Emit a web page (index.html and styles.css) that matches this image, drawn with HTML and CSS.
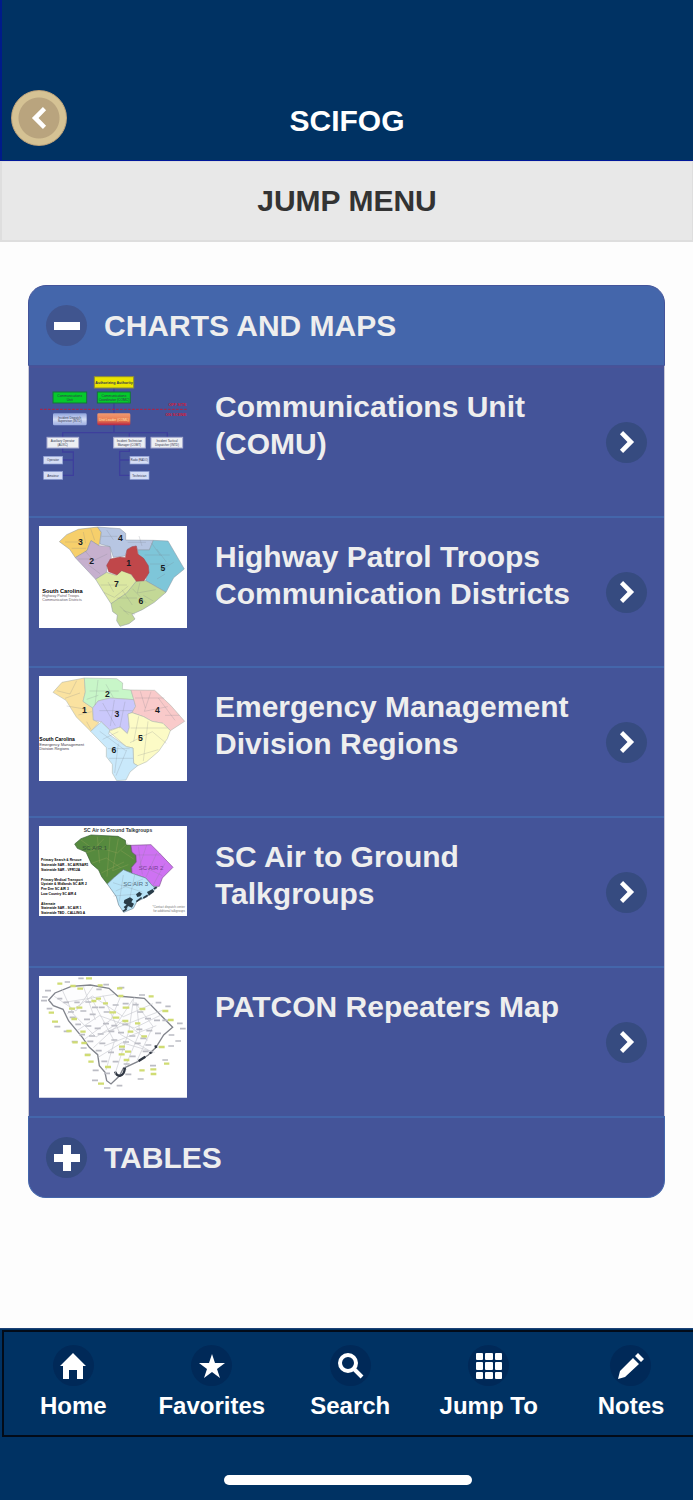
FILE: index.html
```html
<!DOCTYPE html>
<html lang="en">
<head>
<meta charset="utf-8">
<meta name="viewport" content="width=device-width, initial-scale=1">
<title>SCIFOG</title>
<link rel="stylesheet" href="styles.css">
</head>
<body>
<svg class="symbols" aria-hidden="true">
  <symbol id="chevron" viewBox="0 0 14 14"><path d="M4.500 0 11.500 7 4.500 14 2.500 12 7.300 7 2.500 2Z"/></symbol>
</svg>
<header class="topbar">
  <button class="back" type="button" aria-label="Back"><svg class="chevron chevron-left"><use href="#chevron"/></svg></button>
  <h1 class="title">SCIFOG</h1>
</header>
<button class="jump" type="button">JUMP MENU</button>
<main class="content">
  <div class="accordion">
    <button class="section section-open" type="button" aria-expanded="true">
      <span class="disc"><svg class="sign" viewBox="0 0 26 26"><path d="M0 9h26v8H0z"/></svg></span>
      <span>CHARTS AND MAPS</span>
    </button>
    <ul class="list">
      <li><a class="item" href="#comu">
        <svg class="thumb" viewBox="27 30 444 323" aria-hidden="true">
          <defs>
            <linearGradient id="pale" x1="0" y1="0" x2="0" y2="1"><stop offset="0" stop-color="#8ea3dc"/><stop offset=".5" stop-color="#d4ddf5"/><stop offset="1" stop-color="#9aabe0"/></linearGradient>
            <linearGradient id="warm" x1="0" y1="0" x2="0" y2="1"><stop offset="0" stop-color="#f09a72"/><stop offset=".6" stop-color="#e8794e"/><stop offset="1" stop-color="#b02048"/></linearGradient>
          </defs>
          <path d="M252 60V198M98 215V200H412V215M298 200V256H269V328H300M269 282H300M98 240V258H130V328H98M130 282H98" fill="none" stroke="#3d3f9c" stroke-width="4"/>
          <path d="M30 130H470" stroke="#a02850" stroke-width="4" stroke-dasharray="8 4"/>
          <rect x="193" y="32" width="118" height="34" fill="#e9e400" stroke="#8c8c38" stroke-width="3"/>
          <g fill="#06c92c" stroke="#17713f" stroke-width="3"><rect x="69" y="78" width="101" height="33"/><rect x="202" y="78" width="99" height="33"/></g>
          <rect x="69" y="142" width="101" height="36" rx="4" fill="url(#pale)"/>
          <rect x="202" y="142" width="99" height="36" rx="4" fill="url(#warm)"/>
          <g fill="#eceef2" stroke="#a9add0" stroke-width="3"><rect x="51" y="214" width="95" height="32"/><rect x="251" y="214" width="95" height="32"/><rect x="363" y="214" width="95" height="32"/></g>
          <g fill="#d5ddf5" stroke="#91a2d5" stroke-width="2"><rect x="41" y="271" width="57" height="23"/><rect x="41" y="317" width="57" height="23"/><rect x="300" y="271" width="57" height="23"/><rect x="300" y="317" width="57" height="23"/></g>
          <g class="chart-text" text-anchor="middle">
            <text x="252" y="54" font-size="11" font-weight="bold">Authorizing Authority</text>
            <text x="119" y="94" font-size="10">Communications</text><text x="119" y="106" font-size="10">Unit</text>
            <text x="252" y="94" font-size="10">Communications</text><text x="252" y="106" font-size="10">Coordinator (COMC)</text>
            <text x="119" y="159" font-size="9">Incident Dispatch</text><text x="119" y="169" font-size="9">Supervisor (INTD)</text>
            <text x="252" y="165" font-size="10" fill="#ffe0b0">Unit Leader (COML)</text>
            <text x="98" y="229" font-size="9">Auxiliary Operator</text><text x="98" y="240" font-size="9">(AUXC)</text>
            <text x="298" y="229" font-size="9">Incident Technician</text><text x="298" y="240" font-size="9">Manager (COMT)</text>
            <text x="411" y="229" font-size="9">Incident Tactical</text><text x="411" y="240" font-size="9">Dispatcher (INTD)</text>
            <text x="69" y="286" font-size="9">Operator</text><text x="69" y="332" font-size="9">Amateur</text>
            <text x="328" y="286" font-size="8">Radio (RADO)</text><text x="328" y="332" font-size="9">Technician</text>
          </g>
          <g font-size="12" font-weight="bold" fill="#d21a38" text-anchor="end"><text x="469" y="121">OFF SITE</text><text x="469" y="149">ON SCENE</text></g>
        </svg>
        <span class="label">Communications Unit (COMU)</span>
        <span class="disc"><svg class="chevron"><use href="#chevron"/></svg></span>
      </a></li>
      <li><a class="item" href="#troops">
        <svg class="thumb" viewBox="27 24 444 306" aria-hidden="true">
          <path fill="#fff" d="M27 24h444v306H27z"/>
          <g stroke="#8b94a0" stroke-width="1.500" stroke-linejoin="round">
            <path fill="#f6cf6b" d="M88 71 110 50 145 34 203 27 214 43 207 83 183 68 171 98 136 119 119 94Z"/>
            <path fill="#b7c6e2" d="M203 27 270 32 287 46 287 66 370 67 358 96 323 96 318 84 294 92 285 114 250 118 240 86 210 78 214 43Z"/>
            <path fill="#c6b0ce" d="M136 119 171 98 183 68 207 83 240 86 244 118 230 148 230 163 197 184Z"/>
            <path fill="#7ec6d9" d="M370 67 414 69 463 153 431 179 408 223 347 188 356 154 342 129 326 118 323 96 358 96Z"/>
            <path fill="#dce8a2" d="M197 184 230 163 258 172 276 157 300 165 320 188 300 240 243 257 221 223Z"/>
            <path fill="#c3d896" d="M320 188 347 188 408 223 373 253 337 275 306 289 315 303 297 317 270 325 260 308 262 291 248 281 243 257 290 225Z"/>
            <path fill="#c0474a" stroke="#9b4652" d="M230 142 241 123 270 117 286 119 291 95 306 86 319 84 324 109 341 121 355 143 357 164 342 188 319 190 304 169 275 158 261 171 236 161Z"/>
          </g>
          <path class="county" d="M105 72h45M125 91h43M160 42l7 34M182 32l12 35M215 55h47M230 36l20 29M293 73h55M327 54l9 30M364 74l27 39M380 93l29 39M344 111h75M360 138h55M394 155l37-22M381 183l24-15M145 123h43M165 98l25 30 42-20M174 140l36 27M212 201h79M221 223l32 15 42-34M234 192l17 30M260 240h61M276 215l31 46M307 212l42 43M330 193l-8 32 55-10M280 278l35 11M270 265l25 25M340 232l30 17"/>
          <g class="map-num" font-size="26"><text x="151" y="81">3</text><text x="185" y="137">2</text><text x="271" y="70">4</text><text x="296" y="143">1</text><text x="399" y="158">5</text><text x="259" y="207">7</text><text x="333" y="258">6</text></g>
          <text x="37" y="224" font-size="17" font-weight="bold">South Carolina</text><g font-size="11" fill="#665c68"><text x="37" y="237">Highway Patrol Troops</text><text x="37" y="250">Communication Districts</text></g>
        </svg>
        <span class="label">Highway Patrol Troops Communication Districts</span>
        <span class="disc"><svg class="chevron"><use href="#chevron"/></svg></span>
      </a></li>
      <li><a class="item" href="#regions">
        <svg class="thumb" viewBox="27 28 444 315" aria-hidden="true">
          <path fill="#fff" d="M27 28h444v315H27z"/>
          <g stroke="#a9b0a9" stroke-width="1.500" stroke-linejoin="round">
            <path fill="#fae2a0" d="M69 77 96 47 163 34 166 76 159 104 188 124 190 160 207 168 182 194 139 151 108 101Z"/>
            <path fill="#c8f6c8" d="M163 34 260 36 278 49 277 68 303 70 312 99 240 94 204 103 188 124 159 104 166 76Z"/>
            <path fill="#cac8fb" d="M188 124 204 103 240 94 312 99 317 119 306 138 294 142 298 182 292 201 272 181 239 190 214 166 190 160Z"/>
            <path fill="#f9caca" d="M303 70 374 71 422 116 464 164 421 192 399 170 366 164 341 150 306 138 317 119Z"/>
            <path fill="#fcfbc6" d="M306 138 341 150 366 164 399 170 421 192 412 216 386 254 350 285 323 297 311 290 309 244 289 240 236 194 270 181 292 201 298 182 294 142Z"/>
            <path fill="#c9e9fb" d="M182 194 214 166 239 190 236 202 289 240 309 244 311 290 323 297 300 316 288 340 260 342 247 319 247 293 229 270 229 243Z"/>
          </g>
          <path class="county" d="M80 72l40 10 20-40M105 95l45-16M110 118l60 10M145 145l40-10M170 165l13 24M179 73h87M204 40l-9 75M228 53l22 40M170 98l35-12M208 132h100M218 109l38 68M253 100l-12 78M285 105l-16 80M315 94h88M331 74l15 50M363 75l-20 59 70-14M385 94l50 67M405 146h43M302 184h110M326 149l-15 76M354 164l-14 119M300 228l67-33 42 35M323 267l62-18M209 194l78 58M218 218l47-23M234 246h65M237 275h72M265 231l-11 88M290 250l-32 77"/>
          <g class="map-num" font-size="26"><text x="163" y="140">1</text><text x="232" y="90">2</text><text x="261" y="151">3</text><text x="382" y="140">4</text><text x="331" y="223">5</text><text x="252" y="260">6</text></g>
          <text x="28" y="224" font-size="15" font-weight="bold">South Carolina</text><g font-size="12" fill="#45414b"><text x="28" y="238">Emergency Management</text><text x="28" y="251">Division Regions</text></g>
        </svg>
        <span class="label">Emergency Management Division Regions</span>
        <span class="disc"><svg class="chevron"><use href="#chevron"/></svg></span>
      </a></li>
      <li><a class="item" href="#air">
        <svg class="thumb" viewBox="27 23 444 271" aria-hidden="true">
          <path fill="#fff" d="M27 23h444v271H27z"/>
          <path fill="#568a3e" stroke="#395f36" stroke-width="2" d="M134 77 153 61 183 50 264 54 286 66 288 80 303 81 306 101 318 111 319 131 305 147 306 165 280 154 267 167 253 177 232 197 215 175 206 155 184 136 168 101 142 90Z"/>
          <path fill="#ce72f2" stroke="#805093" stroke-width="2" d="M303 81 363 79 388 104 429 147 397 179 388 204 369 204 347 179 306 165 305 147 319 131 318 111 306 101Z"/>
          <path fill="#b8e4f8" stroke="#6f8897" stroke-width="2" d="M232 197 253 177 280 154 306 165 347 179 369 204 382 207 350 236 321 249 310 270 281 282 266 260 259 235Z"/>
          <path d="M153 65l38 28 30-31M169 103l43-14 50 15 31-29M185 135l44-16 43 29M202 55l7 79M240 56l-9 119M265 61l-17 96 47-18M214 164l68-33M273 97l38 25" fill="none" stroke="#9ca85b"/>
          <path class="county" d="M310 110h79M325 85l12 83M350 80l-20 60 67 32M380 104l-31 71M405 135l-36 66M249 193l88 28M257 218l82-36M280 170l-12 79M314 170l-22 103M250 233l90-7"/>
          <path d="M283 245l17-8 9 6-5 9 8 4-6 12-12-5-6 11-7-8 9-7-9-5ZM318 228l10-8 8 6-5 8-9 2ZM351 221l17-9 5 8-16 12Z" fill="#293c48"/>
          <path d="M279 279l11-7M319 250l16-12M340 239l13-8M371 211l9-4" stroke="#2d3a45" stroke-width="5"/>
          <g text-anchor="middle"><text x="264" y="42" font-size="15" font-weight="bold" fill="#303840">SC Air to Ground Talkgroups</text><text x="194" y="95" font-size="18" fill="#32533a">SC AIR 1</text><text x="363" y="155" font-size="18" fill="#794096">SC AIR 2</text><text x="317" y="204" font-size="18" fill="#506b7d">SC AIR 3</text></g>
          <g font-size="10" font-weight="bold"><text x="33" y="129">Primary Search &amp; Rescue</text><text x="33" y="143">Statewide SAR - SC AIR/SAR1</text><text x="33" y="157">Statewide SAR - VFR12A</text><text x="33" y="187">Primary Medical Transport</text><text x="33" y="201">Upstate &amp; Midlands SC AIR 2</text><text x="33" y="215">Pee Dee SC AIR 3</text><text x="33" y="229">Low Country SC AIR 4</text><text x="33" y="259">Alternate</text><text x="33" y="273">Statewide SAR - SC AIR 1</text><text x="33" y="287">Statewide TBD - CALLING A</text></g>
          <g font-size="9" fill="#777" text-anchor="end"><text x="465" y="270">*Contact dispatch center</text><text x="465" y="281">for additional talkgroups</text></g>
        </svg>
        <span class="label">SC Air to Ground Talkgroups</span>
        <span class="disc"><svg class="chevron"><use href="#chevron"/></svg></span>
      </a></li>
      <li><a class="item" href="#patcon">
        <svg class="thumb" viewBox="27 24 444 365" aria-hidden="true">
          <path fill="#fff" d="M27 24h444v365H27z"/>
          <path d="M56 96 75 75 124 55 181 51 237 61 263 84 343 91 428 178 401 201 378 238 354 262 323 281 280 301 268 324 243 348 230 338 225 313 208 293 203 260 178 238 157 208 116 159 99 124 70 113Z" fill="#fdfdfe" stroke="#81848c" stroke-width="4"/>
          <path d="M255 311c8 20 26 14 29-6M280 303l8-2M326 279l20-13M359 256l8-5M376 232l3 8" fill="none" stroke="#303743" stroke-width="7"/>
          <path d="M73 85l65 44 51-73M95 62l34 75 69 70 62-39 53-80M112 137l75-53 93 62 89-39M141 188l67-45 105 37 82-40M163 214l80-59 29-70M190 239l88-81 75 59M206 267l70-43 98 29M228 306l25-86-70-132M254 321l43-133 14-98M284 300l45-107-10-90M321 278l48-103-55-73M219 83l52 116 98 55M160 55l36 101M98 104l155-25M217 196l180-69M222 234l157-61" fill="none" stroke="#cacbd1" stroke-width="2"/>
          <path class="tags" d="M145 31h16M104 42h16M45 68h18M36 87h17M33 98h18M50 122h17M73 176h18M101 190h18M125 221h18M152 240h18M165 260h17M188 307h18M186 337h18M222 360h19M260 353h17M286 319h18M323 333h18M360 293h18M397 276h17M436 219h17M415 234h17M416 201h17M450 182h17M441 166h17M406 115h16M377 104h17M327 81h18M266 59h17M220 50h17M199 64h16M82 92h15M100 103h17M133 103h16M166 102h18M114 132h18M151 129h18M119 148h18M162 154h18M179 139h18M186 118h18M206 118h18M221 132h18M248 111h18M278 107h18M308 110h18M322 132h18M345 152h18M372 157h18M397 157h17M136 169h17M166 174h18M194 181h18M219 167h18M244 173h18M277 169h18M319 184h18M349 188h18M375 196h18M147 200h18M177 204h18M203 198h18M235 190h18M264 194h18M298 204h18M331 211h18M172 220h18M208 226h18M244 216h18M279 222h18M314 226h18M346 231h18M197 248h18M234 253h18M267 244h18M299 265h18M338 250h18M214 280h18M248 281h18M281 288h18M222 316h18"/>
          <path class="tags lime" d="M82 47h15M168 31h18M121 54h16M142 62h17M203 52h15M261 61h16M356 85h15M397 129h18M414 156h17M56 134h16M66 161h18M109 189h16M127 223h16M164 261h17M175 281h16M204 347h18M225 297h18M328 307h16M361 304h18M362 318h17M402 287h16M386 237h18M117 122h18M139 119h18M124 153h17M151 191h16M154 225h16M184 99h15M198 92h15M219 106h15M265 84h15M238 133h20M278 119h20M329 123h17M248 149h20M277 159h18M315 166h16M293 191h17M334 205h17M267 236h18M285 251h18M266 259h18M281 276h17"/>
        </svg>
        <span class="label">PATCON Repeaters Map</span>
        <span class="disc"><svg class="chevron"><use href="#chevron"/></svg></span>
      </a></li>
    </ul>
    <button class="section section-closed" type="button" aria-expanded="false">
      <span class="disc"><svg class="sign" viewBox="0 0 26 26"><path d="M9 0h8v9h9v8h-9v9H9v-9H0V9h9z"/></svg></span>
      <span>TABLES</span>
    </button>
  </div>
</main>
<footer class="footer">
  <nav class="nav">
    <a class="tab" href="#home"><span class="disc disc-dark"><svg class="icon" viewBox="0 0 28 28"><path d="M14 1 27 14H24V27H18V18H10V27H4V14H1Z"/></svg></span>Home</a>
    <a class="tab" href="#favorites"><span class="disc disc-dark"><svg class="icon" viewBox="0 0 28 28"><path d="M14 2 17 11H27L19 17 22 26 14 20 6 26 9 17 1 11H11Z"/></svg></span>Favorites</a>
    <a class="tab" href="#search"><span class="disc disc-dark"><svg class="icon" viewBox="0 0 28 28"><g fill="none" stroke="#fff" stroke-width="4"><circle cx="12" cy="11" r="8"/><path d="m17 16 9 9"/></g></svg></span>Search</a>
    <a class="tab" href="#jump"><span class="disc disc-dark"><svg class="icon" viewBox="0 0 28 28"><g><rect x="1" y="1" width="7" height="7" rx="1"/><rect x="10" y="1" width="8" height="7" rx="1"/><rect x="20" y="1" width="7" height="7" rx="1"/><rect x="1" y="10" width="7" height="8" rx="1"/><rect x="10" y="10" width="8" height="8" rx="1"/><rect x="20" y="10" width="7" height="8" rx="1"/><rect x="1" y="20" width="7" height="7" rx="1"/><rect x="10" y="20" width="8" height="7" rx="1"/><rect x="20" y="20" width="7" height="7" rx="1"/></g></svg></span>Jump To</a>
    <a class="tab" href="#notes"><span class="disc disc-dark"><svg class="icon" viewBox="0 0 28 28"><path d="M16 6 22 12 8 25 1 27 3 19ZM18 4 21 1 27 7 24 10Z"/></svg></span>Notes</a>
  </nav>
  <div class="home-bar"></div>
</footer>
</body>
</html>
```
FILE: styles.css
```css
* { box-sizing: border-box; }
body {
  margin: 0;
  min-height: 100vh;
  display: flex;
  flex-direction: column;
  background: #fdfdfd;
  font-family: "Liberation Sans", Arial, sans-serif;
  font-size: 30px;
  font-weight: bold;
  line-height: 37px;
}
button { font: inherit; margin: 0; cursor: pointer; }
a { color: inherit; text-decoration: none; }
.symbols { display: none; }
.topbar {
  display: grid;
  grid-template-columns: 56px 1fr 56px;
  align-items: center;
  padding: 90px 10px 14px 9px;
  background: #003263;
  border-left: 2px solid #001b8a;
  border-bottom: 1px solid #00189a;
  color: #fff;
}
.back {
  width: 56px;
  height: 56px;
  padding: 0;
  display: grid;
  place-items: center;
  border: 1px solid #c0a47a;
  border-radius: 50%;
  background: radial-gradient(circle, #b9a47e 20px, #d5c294 21px);
}
.title { margin: 4px 0 0; font-size: 30px; text-align: center; }
.chevron { width: 22px; height: 22px; fill: #fff; display: block; }
.chevron-left { transform: rotate(180deg); }
.jump {
  padding: 20px 0 21px;
  border: 2px solid #dedede;
  border-top-width: 1px;
  border-right-width: 1px;
  background: #e8e8e8;
  color: #333;
}
.content { flex: 1; padding: 43px 28px; }
.section {
  width: 100%;
  display: flex;
  align-items: center;
  gap: 17px;
  padding: 19px 17px;
  color: #eee;
  text-align: left;
}
.section-open { background: #4466ab; border: 1px solid #44549a; border-radius: 18px 18px 0 0; }
.section-closed { background: #445499; border: 1px solid #4466ab; border-radius: 0 0 18px 18px; border-top-width: 2px; }
.disc {
  flex: none;
  width: 41px;
  height: 41px;
  border-radius: 50%;
  background: #364b80;
  display: grid;
  place-items: center;
}
.section-open .disc { background: #40558f; }
.sign { width: 26px; height: 26px; fill: #fff; }
.list {
  list-style: none;
  margin: 0;
  padding: 0;
  border: solid #c9c8d8;
  border-width: 0 1px;
  background: #445499;
}
.item {
  min-height: 150px;
  display: grid;
  grid-template-columns: 148px 1fr 41px;
  align-items: start;
  padding: 8px 17px 8px 10px;
  border-top: 2px solid #4466ab;
  color: #eee;
}
.list li:first-child .item { border-top-color: #4a5297; }
.thumb { width: 148px; display: block; color: #222; font-weight: normal; }
.label { padding: 12px 28px 0; }
.item .disc { align-self: center; }
.county { fill: none; stroke: #777f86; stroke-width: 1px; opacity: .65; }
.map-num { fill: #171b24; font-weight: bold; text-anchor: middle; }
.chart-text { fill: #30334b; }
.tags { fill: none; stroke: #bbbcc4; stroke-width: 5px; }
.lime { stroke: #d0dc73; stroke-width: 7px; }
.footer {
  padding: 1px 0 15px 2px;
  border-top: 1px solid #1c4175;
  background: #003263;
  color: #fff;
}
.nav {
  display: grid;
  grid-template-columns: repeat(4, 40fr) 39fr;
  border: 2px solid #020b18;
  border-right: 0;
  padding: 13px 0;
}
.tab {
  display: flex;
  flex-direction: column;
  align-items: center;
  gap: 3px;
  font-size: 24px;
  line-height: 33px;
}
.tab:last-child { padding-left: 11px; }
.disc-dark { background: #002958; }
.icon { width: 28px; height: 28px; fill: #fff; }
.home-bar {
  width: 248px;
  height: 10px;
  margin: 38px auto 0;
  border-radius: 5px;
  background: #fff;
}
```
